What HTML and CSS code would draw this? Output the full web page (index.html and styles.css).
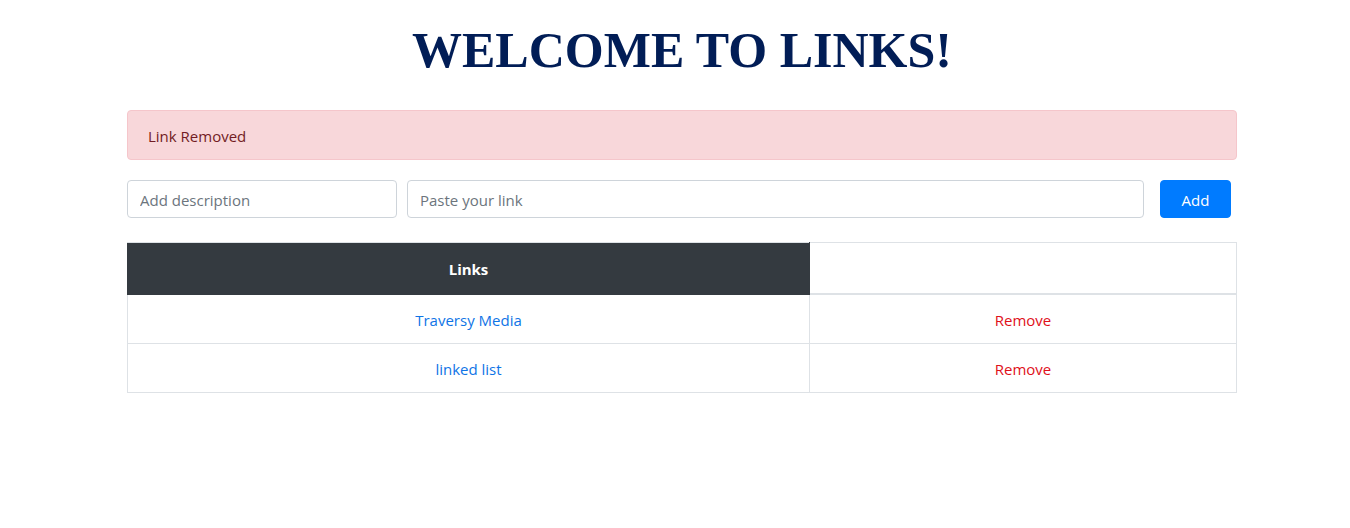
FILE: index.html
```html
<!DOCTYPE html>
<html lang="en">
<head>
<meta charset="utf-8">
<title>Links</title>
<link rel="stylesheet" href="styles.css">
</head>
<body>
<div class="container">
  <h1 class="title">WELCOME TO LINKS!</h1>
  <div class="alert">Link Removed</div>
  <form class="add-form">
    <input class="field field-desc" type="text" placeholder="Add description">
    <input class="field field-link" type="text" placeholder="Paste your link">
    <button class="btn-add" type="button">Add</button>
  </form>
  <table class="links-table">
    <thead>
      <tr>
        <th class="head-dark">Links</th>
        <th class="head-empty"></th>
      </tr>
    </thead>
    <tbody>
      <tr>
        <td><a class="link" href="#">Traversy Media</a></td>
        <td><a class="remove" href="#">Remove</a></td>
      </tr>
      <tr>
        <td><a class="link" href="#">linked list</a></td>
        <td><a class="remove" href="#">Remove</a></td>
      </tr>
    </tbody>
  </table>
</div>
</body>
</html>
```
FILE: styles.css
```css
* { box-sizing: border-box; }
body {
  margin: 0;
  font-family: "Open Sans", "Noto Sans", sans-serif;
  font-size: 16px;
  line-height: 24px;
  color: #212529;
  background: #fff;
}
.container {
  width: 1110px;
  margin: 0 0 0 127px;
}
.title {
  margin: 0;
  padding-top: 20px;
  padding-bottom: 30px;
  font-family: "Liberation Serif", serif;
  font-weight: bold;
  font-size: 50px;
  line-height: 60px;
  color: #011d56;
  text-align: center;
}
.alert {
  height: 50px;
  padding: 13px 20px 11px;
  background: #f8d7da;
  border: 1px solid #f5c6cb;
  border-radius: 4px;
  color: #721c24;
  font-size: 15px;
}
.add-form {
  display: flex;
  margin-top: 20px;
  height: 38px;
}
.field {
  height: 38px;
  padding: 7px 12px 5px;
  border: 1px solid #ced4da;
  border-radius: 4px;
  font-family: inherit;
  font-size: 15px;
  color: #495057;
}
.field::placeholder { color: #6c757d; }
.field-desc { width: 270px; }
.field-link { width: 737px; margin-left: 10px; }
.btn-add {
  width: 71px;
  height: 38px;
  margin-left: 16px;
  padding-top: 2px;
  background: #007bff;
  border: 1px solid #007bff;
  border-radius: 4px;
  color: #fff;
  font-family: inherit;
  font-size: 15px;
}
.links-table {
  width: 100%;
  margin-top: 24px;
  border-collapse: collapse;
  border: 1px solid #dee2e6;
  font-size: 15px;
}
.links-table th,
.links-table td {
  border: 1px solid #dee2e6;
  padding: 13px 12px 11px;
  text-align: center;
  line-height: 24px;
}
.links-table th {
  padding: 14px 12px 12px;
  border-bottom-width: 2px;
  font-weight: bold;
}
.head-dark {
  width: 682px;
  background: #343a40;
  color: #fff;
  border-left-color: #343a40 !important;
  border-right-color: #343a40 !important;
  border-bottom-color: #343a40 !important;
}
.link { color: #0f74e6; text-decoration: none; }
.remove { color: #e0101a; text-decoration: none; }
```
